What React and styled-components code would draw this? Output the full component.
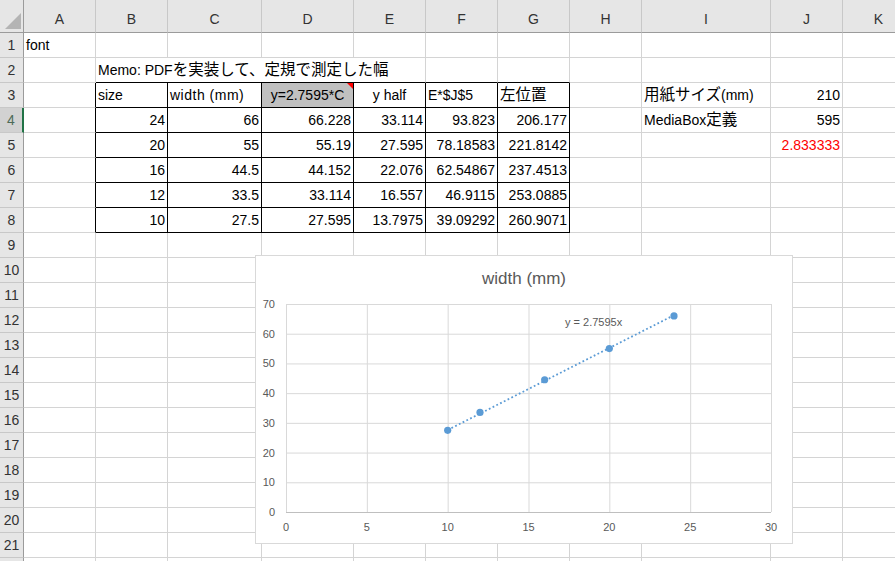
import React from 'react';
import styled, { createGlobalStyle } from 'styled-components';

const GlobalStyle = createGlobalStyle`
  html, body { margin: 0; padding: 0; background: #fff; overflow: hidden; }
  body { font-family: "Liberation Sans", "Noto Sans CJK JP", sans-serif; }
  * { box-sizing: border-box; }
`;

const COLS = [
  { k: 'A', w: 72 }, { k: 'B', w: 72 }, { k: 'C', w: 94 }, { k: 'D', w: 92 },
  { k: 'E', w: 72 }, { k: 'F', w: 72 }, { k: 'G', w: 72 }, { k: 'H', w: 72 },
  { k: 'I', w: 129 }, { k: 'J', w: 72 }, { k: 'K', w: 72 },
];
const ROW_COUNT = 21;
const GRID = '#d4d4d4';
const HEAD_EDGE = '#9b9b9b';

const CELLS = {
  A1: { t: 'font' },
  B2: { t: 'Memo: PDFを実装して、定規で測定した幅', span: 4 },
  B3: { t: 'size' },
  C3: { t: 'width (mm)', ls: 0.5 },
  D3: { t: 'y=2.7595*C', a: 'center', fill: '#c0c0c0', comment: true },
  E3: { t: 'y half', a: 'center' },
  F3: { t: 'E*$J$5' },
  G3: { t: '左位置' },
  I3: { t: '用紙サイズ(mm)' },
  J3: { t: '210', a: 'right' },
  I4: { t: 'MediaBox定義' },
  J4: { t: '595', a: 'right' },
  J5: { t: '2.833333', a: 'right', color: '#ff0000' },
};

const NUMS = [
  ['24', '66', '66.228', '33.114', '93.823', '206.177'],
  ['20', '55', '55.19', '27.595', '78.18583', '221.8142'],
  ['16', '44.5', '44.152', '22.076', '62.54867', '237.4513'],
  ['12', '33.5', '33.114', '16.557', '46.9115', '253.0885'],
  ['10', '27.5', '27.595', '13.7975', '39.09292', '260.9071'],
];
NUMS.forEach((row, i) => {
  row.forEach((v, j) => {
    CELLS['BCDEFG'[j] + (i + 4)] = { t: v, a: 'right' };
  });
});

const Sheet = styled.div`
  position: relative;
  width: 895px;
  height: 561px;
  overflow: hidden;
  display: grid;
  grid-template-columns: 24px ${COLS.map((c) => c.w + 'px').join(' ')};
  grid-template-rows: 33px repeat(${ROW_COUNT}, 25px) 25px;
  font-size: 14px;
  color: #000;
`;

const Corner = styled.div`
  position: relative;
  background: #e6e6e6;
  border-right: 1px solid ${HEAD_EDGE};
  border-bottom: 1px solid ${HEAD_EDGE};
  &::after {
    content: '';
    position: absolute;
    right: 2px;
    bottom: 3px;
    border-style: solid;
    border-width: 0 0 16px 16px;
    border-color: transparent transparent #b4b4b4 transparent;
  }
`;

const ColHead = styled.div`
  background: #e6e6e6;
  border-right: 1px solid #c8c8c8;
  border-bottom: 1px solid ${HEAD_EDGE};
  display: flex;
  align-items: flex-end;
  justify-content: center;
  line-height: 25px;
  color: #333;
`;

const RowHead = styled.div`
  background: ${(p) => (p.$active ? '#d2d2d2' : '#e6e6e6')};
  border-right: ${(p) => (p.$active ? '2px solid #217346' : `1px solid ${HEAD_EDGE}`)};
  border-bottom: 1px solid #c8c8c8;
  text-align: center;
  line-height: 24px;
  color: ${(p) => (p.$active ? '#4d6a58' : '#333')};
`;

const Cell = styled.div`
  position: relative;
  grid-column: span ${(p) => p.$span};
  border-right: 1px solid ${(p) => p.$rc};
  border-bottom: 1px solid ${(p) => p.$bc};
  background: ${(p) => p.$fill};
  color: ${(p) => p.$color};
  text-align: ${(p) => p.$align};
  letter-spacing: ${(p) => p.$ls}px;
  padding: 0 2px 0 2px;
  line-height: 24px;
  white-space: nowrap;
  overflow: visible;
`;

const Jp = styled.span`
  font-size: 15.5px;
`;

const CommentMark = styled.span`
  position: absolute;
  top: 0;
  right: 0;
  border-style: solid;
  border-width: 0 6px 6px 0;
  border-color: transparent #ff0000 transparent transparent;
`;

const ChartFrame = styled.div`
  position: absolute;
  left: 255px;
  top: 255px;
  width: 538px;
  height: 289px;
  background: #fff;
  border: 1px solid #d9d9d9;
`;

const ChartSvg = styled.svg`
  display: block;
  font-family: "Liberation Sans", sans-serif;
`;

const CJK = /[\u3000-\u9fff\uff00-\uffef]/;

function renderText(t) {
  const parts = t.split(/([\u3000-\u9fff\uff00-\uffef]+)/);
  return parts.map((p, i) =>
    CJK.test(p) ? <Jp key={i}>{p}</Jp> : <React.Fragment key={i}>{p}</React.Fragment>
  );
}

const inTable = (c, r) => r >= 3 && r <= 8 && c >= 1 && c <= 6;

function Rows() {
  const out = [];
  for (let r = 1; r <= ROW_COUNT + 1; r++) {
    out.push(<RowHead key={'h' + r} $active={r === 4}>{r <= ROW_COUNT ? r : ''}</RowHead>);
    let c = 0;
    while (c < COLS.length) {
      const id = COLS[c].k + r;
      const d = CELLS[id] || {};
      const span = d.span || 1;
      const last = c + span - 1;
      const rc = inTable(last, r) || (last === 0 && r >= 3 && r <= 8) ? '#000' : GRID;
      const bc = inTable(c, r) || (r === 2 && c >= 1 && c <= 6) ? '#000' : GRID;
      out.push(
        <Cell
          key={id}
          $span={span}
          $rc={rc}
          $bc={bc}
          $fill={d.fill || 'transparent'}
          $color={d.color || '#000'}
          $align={d.a || 'left'}
          $ls={d.ls || 0}
        >
          {d.t ? renderText(d.t) : null}
          {d.comment ? <CommentMark /> : null}
        </Cell>
      );
      c += span;
    }
  }
  return out;
}

const PL = 30, PR = 515, PT = 48, PB = 256;
const xs = (v) => PL + (v * (PR - PL)) / 30;
const ys = (v) => PB - (v * (PB - PT)) / 70;
const POINTS = [[10, 27.5], [12, 33.5], [16, 44.5], [20, 55], [24, 66]];
const BLUE = '#5b9bd5';
const LABEL = '#595959';

function Chart() {
  const yTicks = [0, 10, 20, 30, 40, 50, 60, 70];
  const xTicks = [0, 5, 10, 15, 20, 25, 30];
  return (
    <ChartFrame>
      <ChartSvg width="536" height="287" viewBox="0 0 536 287">
        <text x="268" y="28" textAnchor="middle" fontSize="17" fill={LABEL}>width (mm)</text>
        {yTicks.map((v) => (
          <line key={'gy' + v} x1={PL} x2={PR} y1={ys(v) + 0.5} y2={ys(v) + 0.5} stroke={v === 0 ? '#bfbfbf' : '#d9d9d9'} strokeWidth="1" />
        ))}
        {xTicks.map((v) => (
          <line key={'gx' + v} x1={xs(v) + 0.5} x2={xs(v) + 0.5} y1={PT} y2={PB} stroke="#d9d9d9" strokeWidth="1" />
        ))}
        {yTicks.map((v) => (
          <text key={'ly' + v} x="19" y={ys(v) + 4} textAnchor="end" fontSize="11" fill={LABEL}>{v}</text>
        ))}
        {xTicks.map((v) => (
          <text key={'lx' + v} x={xs(v)} y="275" textAnchor="middle" fontSize="11" fill={LABEL}>{v}</text>
        ))}
        <line
          x1={xs(10)} y1={ys(27.595)} x2={xs(24)} y2={ys(66.228)}
          stroke={BLUE} strokeWidth="1.8" strokeDasharray="1.8 2.4"
        />
        {POINTS.map(([x, y]) => (
          <circle key={x} cx={xs(x)} cy={ys(y)} r="3.6" fill={BLUE} />
        ))}
        <text x="309" y="70" fontSize="11" fill={LABEL}>y = 2.7595x</text>
      </ChartSvg>
    </ChartFrame>
  );
}

export default function App() {
  return (
    <>
      <GlobalStyle />
      <Sheet>
        <Corner />
        {COLS.map((c) => (
          <ColHead key={c.k}>{c.k}</ColHead>
        ))}
        <Rows />
        <Chart />
      </Sheet>
    </>
  );
}
